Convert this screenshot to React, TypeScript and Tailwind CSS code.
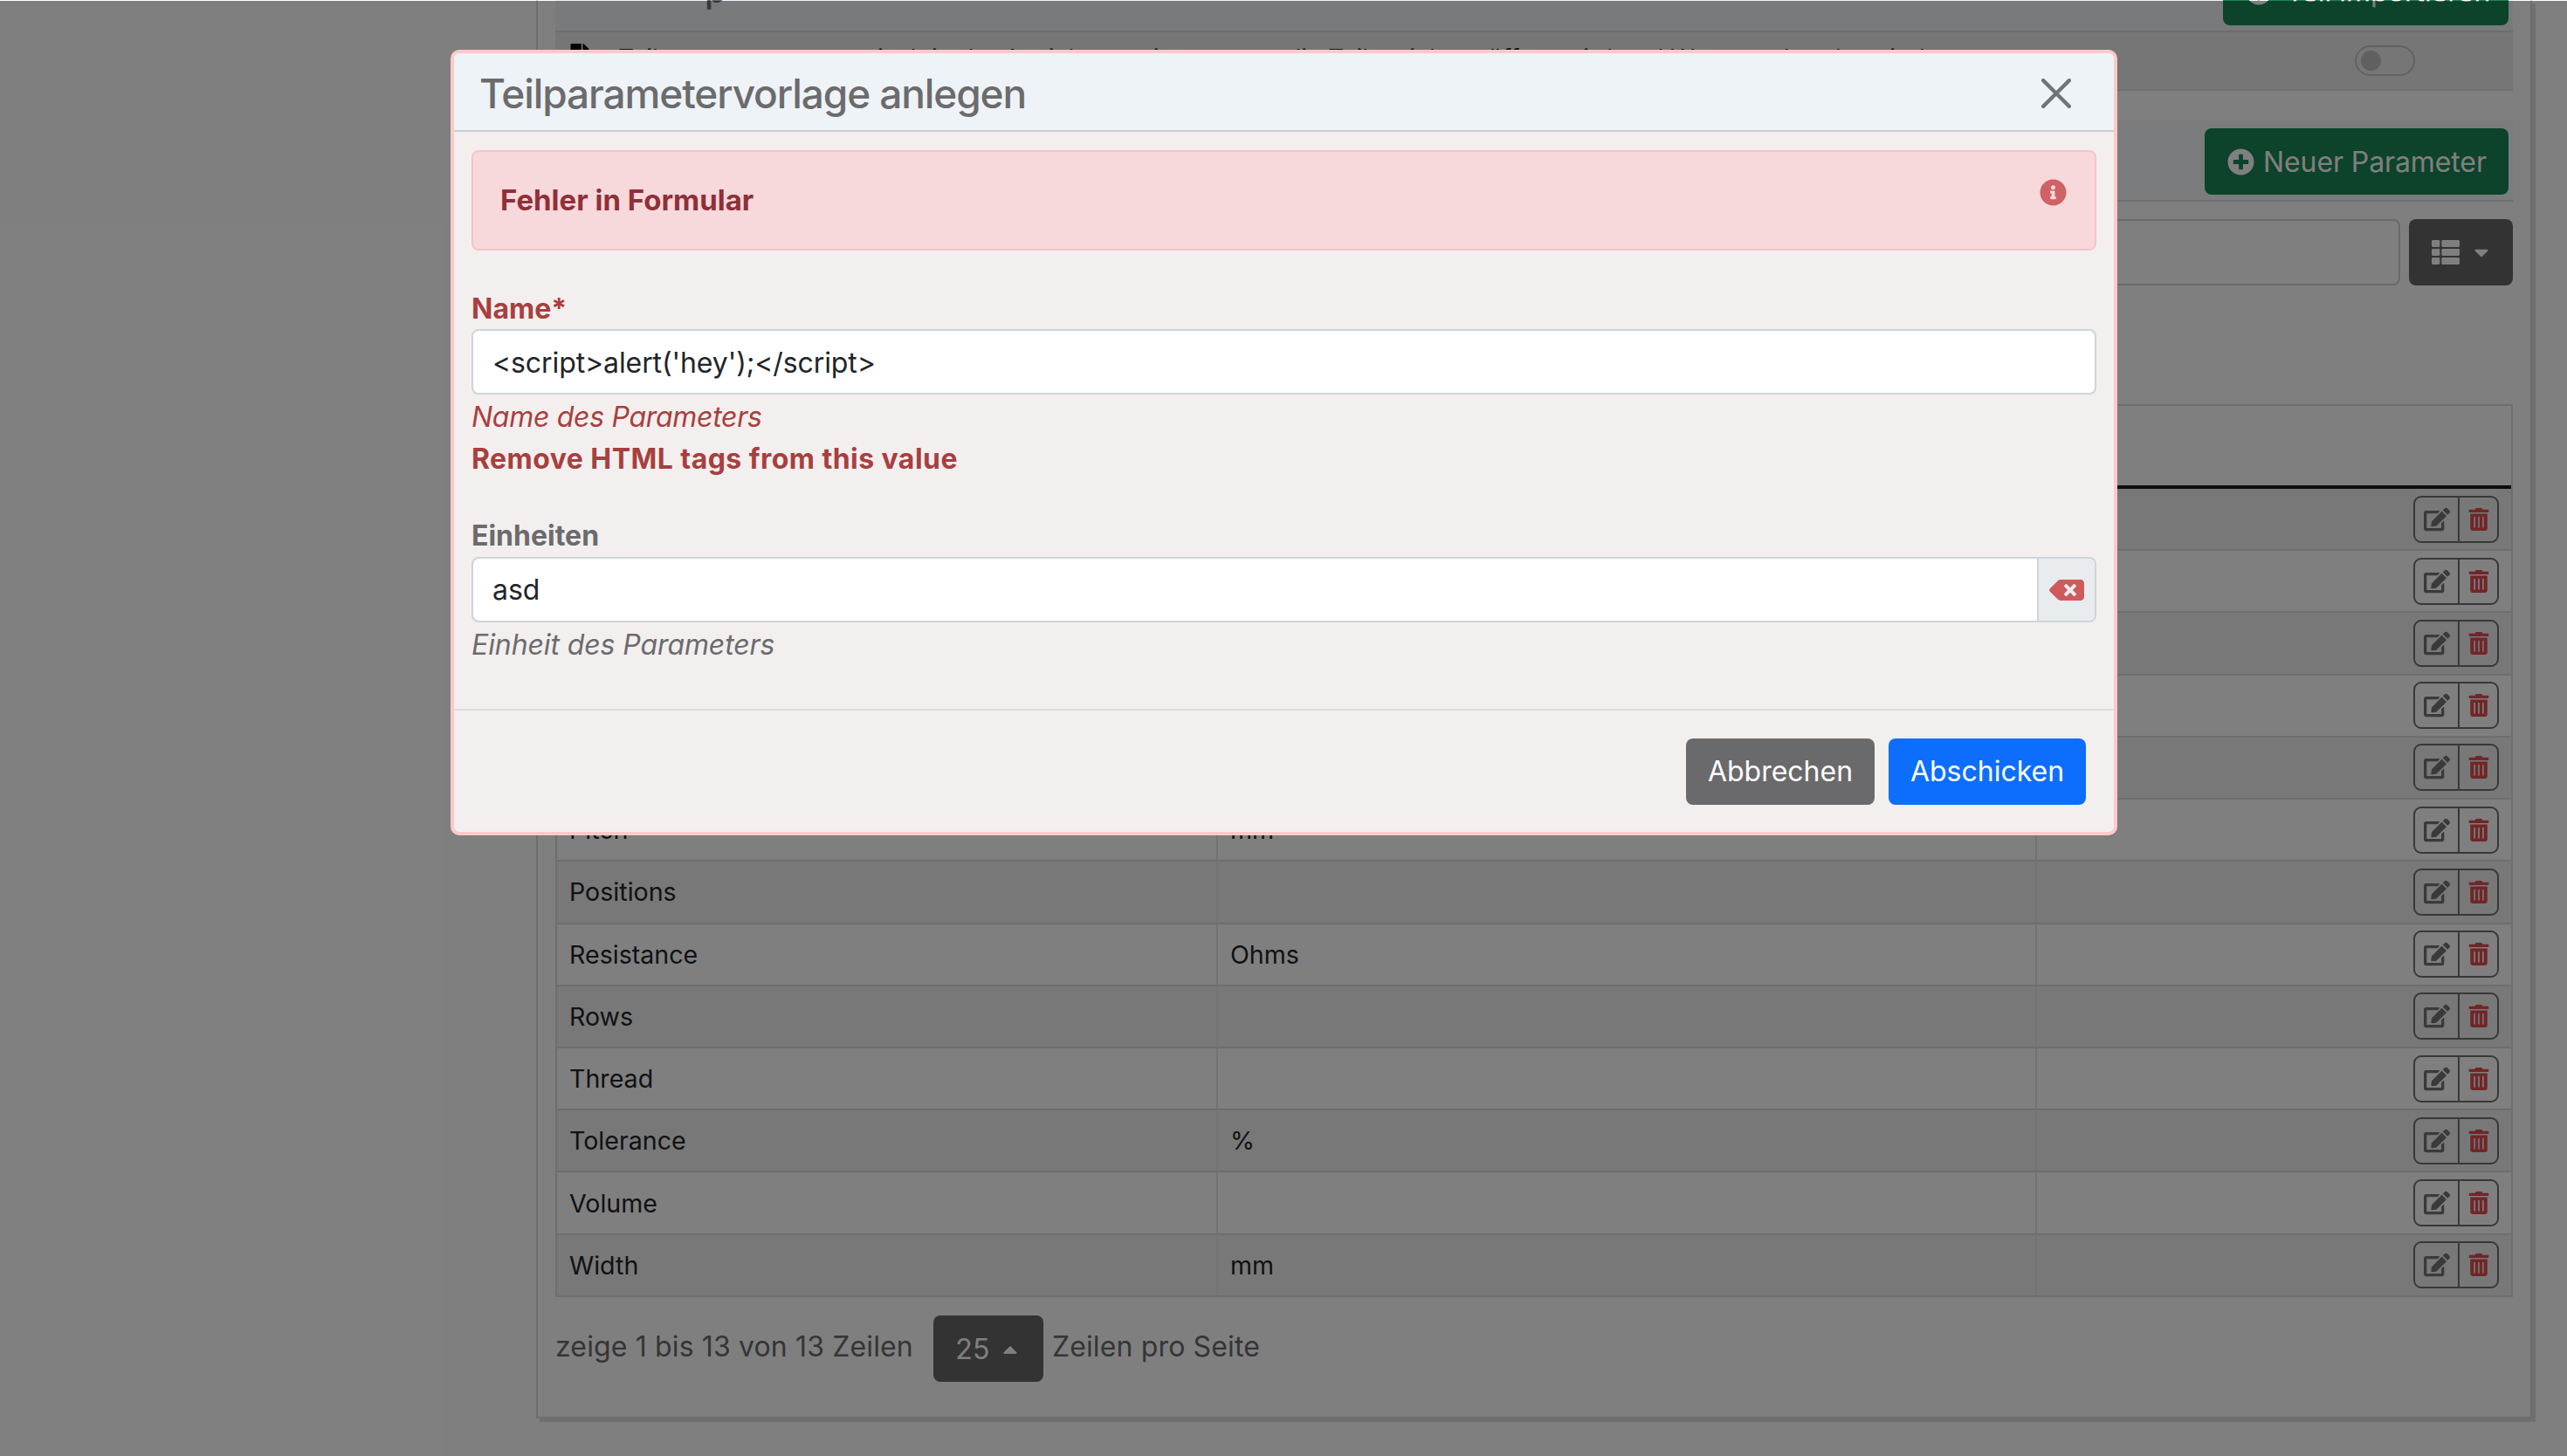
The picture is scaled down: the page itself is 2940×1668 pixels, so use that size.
import React from "react";
import {
  FaArrowCircleUp,
  FaBackspace,
  FaCaretDown,
  FaCaretUp,
  FaEdit,
  FaFile,
  FaInfoCircle,
  FaPlusCircle,
  FaThList,
  FaTrashAlt,
} from "react-icons/fa";

// rows 1-5 sit completely behind the dialog, so they carry no text
const ROWS: { name: string; unit: string }[] = [
  { name: "", unit: "" },
  { name: "", unit: "" },
  { name: "", unit: "" },
  { name: "", unit: "" },
  { name: "", unit: "" },
  { name: "Pitch", unit: "mm" },
  { name: "Positions", unit: "" },
  { name: "Resistance", unit: "Ohms" },
  { name: "Rows", unit: "" },
  { name: "Thread", unit: "" },
  { name: "Tolerance", unit: "%" },
  { name: "Volume", unit: "" },
  { name: "Width", unit: "mm" },
];

function ParameterRow({ name, unit, odd }: { name: string; unit: string; odd: boolean }) {
  return (
    <div
      className={`grid h-[71.23px] grid-cols-[757px_938px_1fr] border-b-2 border-[#dcdcdc] text-[28.6px] text-[#212529] ${
        odd ? "bg-[#f0f0f0]" : "bg-white"
      }`}
    >
      <div className="flex items-center border-r-2 border-[#e6e6e6] pt-[2px] pl-[14px]">{name}</div>
      <div className="flex items-center border-r-2 border-[#e6e6e6] pt-[2px] pl-[14px]">{unit}</div>
      <div className="flex items-center justify-end pr-[14px]">
        <div className="flex h-[54px] w-[98px] rounded-[9px] border-2 border-[#717171]">
          <span className="flex w-[51px] items-center justify-center border-r-2 border-[#717171] text-[#747474]">
            <FaEdit size={30} />
          </span>
          <span className="flex flex-1 items-center justify-center text-[#e04c50]">
            <FaTrashAlt size={26} />
          </span>
        </div>
      </div>
    </div>
  );
}

function BackgroundPage() {
  return (
    <div className="ml-[614px] h-[1625px] w-[2286px] border-x-2 border-b-2 border-[#dadada] px-[20px] text-[32px] text-[#6b6b6d] shadow-[4px_4px_0_#dedede]">
      {/* cropped card header */}
      <div className="flex h-[37px] items-end justify-between border-b-2 border-[#d8d8d8] bg-[#f0f4f8] pr-[5px]">
        <span className="mb-[26px] ml-[171px] text-[40px] leading-[40px] font-medium text-[#6b6b6d]">p</span>
        <button className="mb-[6px] flex h-[76px] w-[327px] items-center rounded-[8px] bg-[#198754] pl-[26px] text-white">
          <FaArrowCircleUp size={30} />
          <span className="ml-[16px]">Teil importieren</span>
        </button>
      </div>

      <div className="flex h-[67px] items-center justify-between border-b-2 border-[#e0e0e0] bg-[#ececec] pr-[112px] pl-[14px] text-[28px] text-[#212529]">
        <div className="-mt-[6px] flex items-center gap-[30px]">
          <FaFile size={28} className="-mt-[6px] text-black" />
          <span>Teilparameter automatisch in der Ansicht anzeigen, wenn die Teilansicht geöffnet wird und Werte vorhanden sind</span>
        </div>
        <div className="flex h-[35px] w-[69px] items-center rounded-full border-2 border-[#c4c4c4] pl-[5px]">
          <span className="h-[23px] w-[23px] rounded-full bg-[#c0c0c0]" />
        </div>
      </div>

      <div className="mt-[33px] flex h-[94px] items-start justify-end border-b-2 border-[#dcdcdc] bg-[#f6f8fa] pt-[10px] pr-[5px]">
        <button className="flex h-[76px] w-[348px] items-center rounded-[8px] bg-[#198754] pt-[1px] pl-[26px] tracking-[-0.1px] text-white">
          <FaPlusCircle size={31} />
          <span className="ml-[10px]">Neuer Parameter</span>
        </button>
      </div>

      <div className="mt-[20px] flex h-[76px] gap-[10px]">
        <div className="flex-1 rounded-[8px] border-2 border-[#ced4da]" />
        <button className="flex w-[119px] items-center justify-center gap-[12px] rounded-[8px] bg-[#666668] pl-[2px] text-white">
          <FaThList size={32} />
          <FaCaretDown size={26} />
        </button>
      </div>

      {/* table */}
      <div className="mt-[136px] border-x-2 border-[#dcdcdc]">
        <div className="h-[97px] border-t-2 border-b-4 border-t-[#dcdcdc] border-b-[#1a1a1a]" />
        {ROWS.map((r, i) => (
          <ParameterRow key={i} name={r.name} unit={r.unit} odd={i % 2 === 0} />
        ))}
      </div>

      <div className="mt-[21px] flex h-[76px] items-center tracking-[0.14px]">
        <span className="mb-[3px]">zeige 1 bis 13 von 13 Zeilen</span>
        <button className="mr-[10px] ml-[23px] flex h-[76px] w-[126px] items-center justify-center gap-[10px] rounded-[8px] bg-[#666668] pt-[2px] text-white">
          25
          <FaCaretUp size={26} />
        </button>
        <span className="mb-[3px]">Zeilen pro Seite</span>
      </div>
    </div>
  );
}

function ErrorDialog() {
  return (
    <div className="absolute top-[57px] left-[516px] h-[900px] w-[1909px] overflow-hidden rounded-[10px] border-4 border-[#fdc9c9] bg-[#f3efee] text-[32px] text-[#6b6b6d]">
      <div className="flex h-[90px] items-center justify-between border-b-2 border-[#cdcdcd] bg-[#eef3f7] pr-[49px] pl-[29px]">
        <h5 className="pt-[4px] text-[46px] font-medium tracking-[-1.1px]">Teilparametervorlage anlegen</h5>
        <svg width="34" height="34" viewBox="0 0 16 16" fill="#6f7478" className="mt-[3px]">
          <path d="M.293.293a1 1 0 0 1 1.414 0L8 6.586 14.293.293a1 1 0 1 1 1.414 1.414L9.414 8l6.293 6.293a1 1 0 0 1-1.414 1.414L8 9.414l-6.293 6.293a1 1 0 0 1-1.414-1.414L6.586 8 .293 1.707a1 1 0 0 1 0-1.414z" />
        </svg>
      </div>

      <div className="px-[20px]">
        <div className="mt-[21px] flex h-[115px] items-start justify-between rounded-[8px] border-2 border-[#f6c3c8] bg-[#f7d8db] pt-[31px] pr-[32px] pl-[31px] text-[33px] font-bold text-[#8f3038]">
          <span>Fehler in Formular</span>
          <FaInfoCircle size={31} className="text-[#ce6265]" />
        </div>

        <label className="mt-[42px] block h-[48px] leading-[50px] font-bold text-[#a83f3f]">Name*</label>
        <input
          readOnly
          value="<script>alert('hey');</script>"
          className="block h-[75px] w-full rounded-[8px] border-2 border-[#ced4da] bg-white px-[22px] pt-[2px] tracking-[-0.1px] text-[#212529]"
        />
        <div className="mt-[2px] leading-[48px] tracking-[-0.3px] text-[#a83f3f] italic">Name des Parameters</div>
        <div className="leading-[48px] font-bold tracking-[0.45px] text-[#a83f3f]">Remove HTML tags from this value</div>

        <label className="mt-[40px] block leading-[48px] font-bold text-[#6b6b6d]">Einheiten</label>
        <div className="flex h-[75px] rounded-[8px] border-2 border-[#ced4da]">
          <input readOnly value="asd" className="min-w-0 flex-1 rounded-l-[8px] bg-white px-[22px] text-[#212529]" />
          <span className="flex w-[66px] items-center justify-center rounded-r-[8px] border-l-2 border-[#ced4da] bg-[#e9ecef] text-[#cf5a5c]">
            <FaBackspace size={40} />
          </span>
        </div>
        <div className="mt-[2px] leading-[48px] tracking-[-0.1px] italic">Einheit des Parameters</div>
      </div>

      <div className="mt-[49px] flex h-[145px] items-start justify-end gap-[16px] border-t-2 border-[#dedede] pt-[32px] pr-[32px]">
        <button className="h-[76px] w-[216px] rounded-[8px] bg-[#6a6a6c] text-white">Abbrechen</button>
        <button className="h-[76px] w-[226px] rounded-[8px] bg-[#0d6efd] text-white">Abschicken</button>
      </div>
    </div>
  );
}

export default function App() {
  return (
    <div className="relative h-[1668px] w-[2940px] overflow-hidden bg-white font-['Inter',sans-serif]">
      <BackgroundPage />
      <div className="absolute inset-x-0 top-[1px] bottom-0 bg-black/50" />
      <ErrorDialog />
    </div>
  );
}
